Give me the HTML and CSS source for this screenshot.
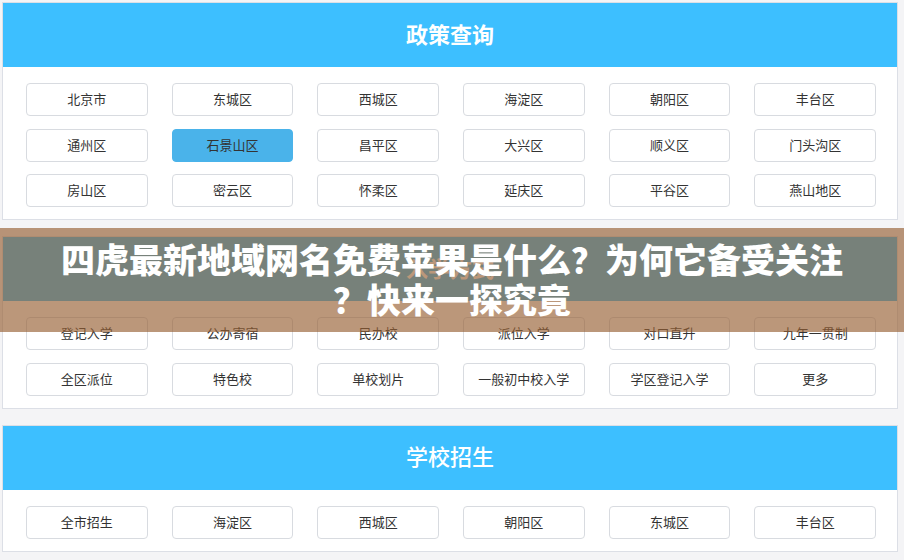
FILE: index.html
```html
<!DOCTYPE html>
<html lang="zh-CN">
<head>
<meta charset="utf-8">
<title>政策查询</title>
<link rel="stylesheet" href="styles.css">
</head>
<body>
<div class="page">
  <section class="panel">
    <h2 class="panel-head bold">政策查询</h2>
    <div class="grid">
      <a class="btn">北京市</a><a class="btn">东城区</a><a class="btn">西城区</a><a class="btn">海淀区</a><a class="btn">朝阳区</a><a class="btn">丰台区</a>
      <a class="btn">通州区</a><a class="btn active">石景山区</a><a class="btn">昌平区</a><a class="btn">大兴区</a><a class="btn">顺义区</a><a class="btn">门头沟区</a>
      <a class="btn">房山区</a><a class="btn">密云区</a><a class="btn">怀柔区</a><a class="btn">延庆区</a><a class="btn">平谷区</a><a class="btn">燕山地区</a>
    </div>
  </section>
  <section class="panel">
    <h2 class="panel-head bold">入学方式</h2>
    <div class="grid">
      <a class="btn">登记入学</a><a class="btn">公办寄宿</a><a class="btn">民办校</a><a class="btn">派位入学</a><a class="btn">对口直升</a><a class="btn">九年一贯制</a>
      <a class="btn">全区派位</a><a class="btn">特色校</a><a class="btn">单校划片</a><a class="btn">一般初中校入学</a><a class="btn">学区登记入学</a><a class="btn">更多</a>
    </div>
  </section>
  <section class="panel">
    <h2 class="panel-head">学校招生</h2>
    <div class="grid">
      <a class="btn">全市招生</a><a class="btn">海淀区</a><a class="btn">西城区</a><a class="btn">朝阳区</a><a class="btn">东城区</a><a class="btn">丰台区</a>
    </div>
  </section>
</div>
<div class="banner">
  <h1 class="banner-title">四虎最新地域网名免费苹果是什么？为何它备受关注？快来一探究竟</h1>
</div>
</body>
</html>
```

FILE: styles.css
```css
html, body {
  margin: 0;
  padding: 0;
  background: #f4f4f6;
}
body {
  font-family: "Noto Sans CJK SC", "Noto Sans", sans-serif;
  color: #333;
  width: 904px;
  height: 560px;
  overflow: hidden;
  position: relative;
}
.page {
  padding: 2px 6px 0 2px;
  display: flex;
  flex-direction: column;
  gap: 16px;
}
.panel {
  background: #fff;
  border: 1px solid #dcdfe6;
}
.panel-head {
  margin: 0;
  height: 64px;
  box-sizing: border-box;
  padding-bottom: 5px;
  background: #3dbfff;
  color: #fff;
  font-size: 22px;
  font-weight: 500;
  display: flex;
  align-items: center;
  justify-content: center;
}
.panel-head.bold {
  font-weight: 700;
}
.grid {
  display: grid;
  grid-template-columns: repeat(6, 1fr);
  column-gap: 24px;
  row-gap: 12.5px;
  padding: 16px 21px 12px 23px;
}
.btn {
  height: 33px;
  box-sizing: border-box;
  padding-bottom: 2px;
  border: 1px solid #d8dbe0;
  border-radius: 4px;
  background: #fff;
  font-size: 13px;
  color: #333;
  display: flex;
  align-items: center;
  justify-content: center;
  white-space: nowrap;
}
.btn.active {
  background: #4ab3ea;
  border-color: #4ab3ea;
}
.banner {
  position: absolute;
  left: 0;
  right: 0;
  top: 228px;
  height: 104px;
  box-sizing: border-box;
  padding-top: 11px;
  background: rgba(150, 95, 50, 0.65);
  display: flex;
  justify-content: center;
}
.banner-title {
  margin: 0;
  width: 800px;
  text-align: center;
  color: #fff;
  font-size: 34px;
  line-height: 40px;
  font-weight: 900;
  line-break: anywhere;
  word-break: break-all;
}
```
